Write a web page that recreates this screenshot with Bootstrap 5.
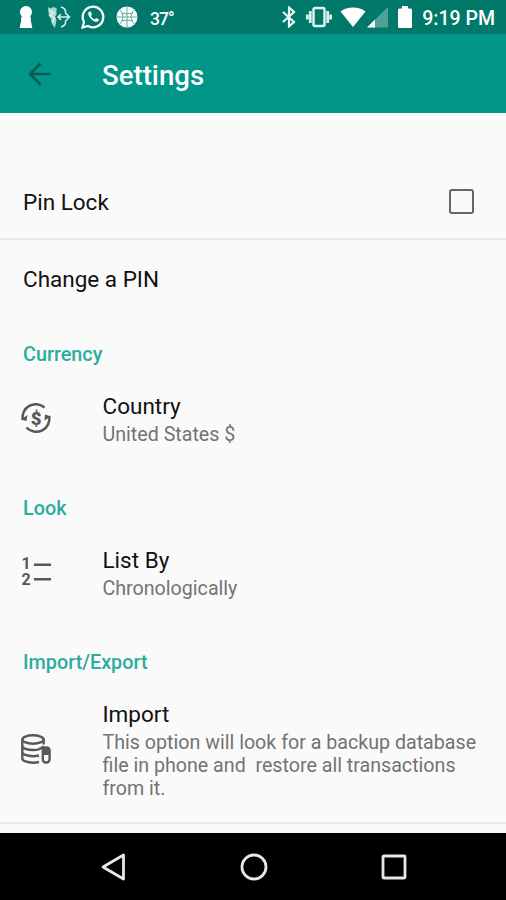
<!DOCTYPE html>
<html lang="en">
<head>
<meta charset="utf-8">
<meta name="viewport" content="width=device-width, initial-scale=1">
<title>Settings</title>
<link href="https://cdn.jsdelivr.net/npm/bootstrap@5.3.0/dist/css/bootstrap.min.css" rel="stylesheet">
<style>
  body { font-family: Roboto, "Liberation Sans", sans-serif; background: #fafafa; color: #111; }
  svg { display: block; flex: none; }
  .screen { width: 506px; height: 900px; }
  .status-strip { height: 34px; background: #00796b; padding: 0 11px 0 18px; }
  .status-text { font-size: 19.5px; font-weight: 500; line-height: 34px; padding-top: 4px; }
  .temp-text { font-size: 17.5px; letter-spacing: -.9px; padding-top: 4px; }
  .app-bar { height: 79px; background: #009688; padding: 0 24px; }
  .app-title { font-size: 27.6px; font-weight: 500; line-height: 32px; margin: 4px 0 0 47px; }
  .prefs { padding-top: 51px; }
  .pref-row { min-height: 76px; padding: 0 32px 0 23px; }
  .split { border-bottom: 2px solid #e9e9e9; }
  .pref-title { font-size: 22.5px; line-height: 26px; }
  .pref-row .pref-title { padding-top: 2px; }
  .pref-note { font-size: 19.65px; line-height: 23px; margin-top: 4px; color: #737373; white-space: pre-line; }
  .pref-text { padding-top: 3px; }
  .pref-icon { width: 82.5px; flex: none; }
  .group-title { font-size: 19.8px; font-weight: 500; line-height: 23px; color: #2aada0; padding: 27px 23px 13px; margin: 0; }
  .group-row { min-height: 77px; padding: 0 20px; margin-bottom: 14px; }
  .group-row-tall { min-height: 123px; margin-bottom: 12px; }
  .check-box { width: 25px; height: 25px; border: 2.5px solid #666; border-radius: 3px; margin: 0; background: transparent; appearance: none; }
  .list-digits { width: 12px; font-size: 16px; font-weight: 700; line-height: 15.5px; color: #585858; text-align: center; }
  .nav-strip { height: 67px; background: #000; padding: 0 98px 0 100px; }
</style>
</head>
<body>
<div class="screen d-flex flex-column overflow-hidden">
  <div class="status-strip d-flex align-items-center justify-content-between text-white">
    <div class="d-flex align-items-center">
      <svg width="16" height="24" viewBox="0 0 16 24" fill="#fff"><path d="M8 1a6 6 0 0 1 6 6c0 2-.8 3.300-2 4.300L14.300 23H1.700L4 11.300C2.800 10.300 2 9 2 7a6 6 0 0 1 6-6z"/><path d="M4 10h8l1 5H3z"/></svg>
      <svg width="23" height="24" viewBox="0 0 23 24" fill="none" stroke="#d8f0ec" stroke-width="1.500" style="margin-left:14px"><path d="M0 2l3 1.500L5 2l3.500 1v7l-2 2 2 3-1.500 8-3-4-1-5-2-3z" fill="#a9d5ce" stroke="none"/><path d="M1 5l5 3-4 2 5 3-3 4M10.500 12h11M13 9l-3 3 3 3M13 2c3.500 1 5 3 4.500 6l4 4-4 4c.5 3-1 5-4.500 6"/></svg>
      <svg width="24" height="24" viewBox="0 0 24 24" fill="none" stroke="#fff" stroke-width="2.200" style="margin-left:10px"><path d="M1.500 22.500L3 17a10.300 10.300 0 1 1 4 4z"/><path d="M8.300 6.500c-1.500 1-1.600 3.200.6 6 2.300 3 5 4.800 7.100 4.200 1.700-.5 2-1.800 1.700-2.400l-2.500-1.300-1.500 1.500c-1.900-.8-3-2-3.800-3.500l1.100-1.400-1.200-2.900z" fill="#fff" stroke="none"/></svg>
      <svg width="22" height="22" viewBox="0 0 22 22" style="margin-left:11px"><circle cx="11" cy="11" r="10.500" fill="#fff"/><path d="M11 0v22M0 11h22M3.500 3.500c4.500 5 4.500 10 0 15M18.500 3.500c-4.500 5-4.500 10 0 15M5 7c4 1 8 1 12 0M5 15c4-1 8-1 12 0" fill="none" stroke="#62aaa0" stroke-width="1"/></svg>
      <span class="status-text temp-text ms-2 ps-1">37°</span>
    </div>
    <div class="d-flex align-items-center">
      <svg width="14" height="22" viewBox="0 0 14 22" fill="none" stroke="#e8f6f4" stroke-width="2.200"><path d="M1 6l11 10-5 4.500v-19L12 6 1 16"/></svg>
      <svg width="26" height="22" viewBox="0 0 26 22" fill="none" stroke="#d8f0ec" style="margin-left:10px"><rect x="7.500" y="2" width="11" height="18" rx="1.500" stroke="#e4f5f2" stroke-width="2.400"/><path d="M4.300 5v12M21.700 5v12M1.300 8.500v5M24.700 8.500v5" stroke-width="2.800"/></svg>
      <svg width="26" height="20" viewBox="0 0 26 20" fill="#fff" style="margin-left:8px"><path d="M13 20L.5 4.500C7-1 19-1 25.500 4.500z"/></svg>
      <svg width="21" height="21" viewBox="0 0 21 21" style="margin-left:1px"><path d="M21 0v20.500H0z" fill="#4da196"/><path d="M8 12.500v8H0z" fill="#fff"/></svg>
      <svg width="14" height="22" viewBox="0 0 14 22" fill="#fff" style="margin-left:10px;margin-right:2px"><path d="M4 0h6v2.500h2.500q1.500 0 1.500 1.500v16.500q0 1.500-1.500 1.500h-11Q0 22 0 20.500V4q0-1.500 1.500-1.500H4z"/></svg>
      <span class="status-text ms-2">9:19 PM</span>
    </div>
  </div>

  <header class="app-bar d-flex align-items-center text-white">
    <svg width="31" height="24" viewBox="0 0 31 24" fill="none" stroke="#075c52" stroke-width="2.500"><path d="M27 12H7M16.500 1.500L6 12l10.500 10.500"/></svg>
    <h1 class="app-title">Settings</h1>
  </header>

  <main class="prefs flex-grow-1 overflow-hidden">
    <label class="pref-row split d-flex align-items-center justify-content-between">
      <span class="pref-title">Pin Lock</span>
      <input class="check-box" type="checkbox">
    </label>
    <div class="pref-row d-flex align-items-center"><span class="pref-title">Change a PIN</span></div>

    <h2 class="group-title">Currency</h2>
    <div class="group-row d-flex align-items-center">
      <div class="pref-icon">
        <svg width="32" height="32" viewBox="0 0 32 32" fill="none" stroke="#585858" stroke-width="2.500"><path d="M2.800 18A13.200 13.200 0 0 1 24.500 5.500M6.500 25.500A13.200 13.200 0 0 0 29.200 14"/><path d="M.8 17.500L7.500 13l-1 6zM31 14.500l-6.500 4 .5-6z" fill="#585858" stroke="none"/><text x="16" y="22.500" text-anchor="middle" font-size="18.500" font-weight="900" fill="#585858" stroke="none">$</text></svg>
      </div>
      <div class="pref-text"><div class="pref-title">Country</div><div class="pref-note">United States $</div></div>
    </div>

    <h2 class="group-title">Look</h2>
    <div class="group-row d-flex align-items-center">
      <div class="pref-icon d-flex align-items-center">
        <div class="list-digits"><div>1</div><div>2</div></div>
        <svg width="20" height="32" viewBox="0 0 20 32" fill="#585858"><path d="M2 7.500h17v2.600H2zM2 22h17v2.600H2z"/></svg>
      </div>
      <div class="pref-text"><div class="pref-title">List By</div><div class="pref-note">Chronologically</div></div>
    </div>

    <h2 class="group-title">Import/Export</h2>
    <div class="group-row group-row-tall d-flex align-items-center">
      <div class="pref-icon">
        <svg width="32" height="32" viewBox="0 0 32 32" fill="none" stroke="#585858" stroke-width="2.400"><ellipse cx="13" cy="6.500" rx="10.700" ry="4.200"/><path d="M2.300 6.500v19c0 2.300 4.700 4.200 10.700 4.200 2.500 0 4.500-.3 6-.7M23.700 6.500v5M2.300 12.800c0 2.300 4.700 4.200 10.700 4.200 2.500 0 4.500-.3 6-.7M2.300 19c0 2.300 4.700 4.200 10.700 4.200 2.500 0 4.500-.3 6-.7M19 16c2.500-.7 4.200-1.500 4.700-3"/><rect x="22.800" y="14.500" width="6.800" height="15" rx="3"/><path d="M23 16q3-2 6 0v6h-6z" fill="#585858" stroke="none"/></svg>
      </div>
      <div class="pref-text"><div class="pref-title">Import</div><div class="pref-note">This option will look for a backup database
file in phone and&nbsp; restore all transactions
from it.</div></div>
    </div>
    <div class="split"></div>
  </main>

  <nav class="nav-strip d-flex align-items-center justify-content-between">
    <svg width="28" height="30" viewBox="0 0 28 30" fill="none" stroke="#e8e8e8" stroke-width="2.800" stroke-linejoin="round"><path d="M23.500 3v24L3 15z"/></svg>
    <svg width="28" height="28" viewBox="0 0 28 28" fill="none" stroke="#e8e8e8" stroke-width="2.800"><circle cx="14" cy="14" r="12"/></svg>
    <svg width="28" height="28" viewBox="0 0 28 28" fill="none" stroke="#e8e8e8" stroke-width="2.800"><rect x="3" y="3" width="22" height="22" rx="1"/></svg>
  </nav>
</div>
<script src="https://cdn.jsdelivr.net/npm/bootstrap@5.3.0/dist/js/bootstrap.bundle.min.js"></script>
</body>
</html>
